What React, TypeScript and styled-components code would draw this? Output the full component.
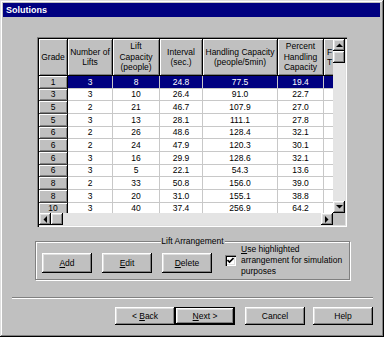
import { Fragment } from "react";
import styled, { createGlobalStyle, css } from "styled-components";

const GlobalStyle = createGlobalStyle`
    html, body {
        margin: 0;
        padding: 0;
        background: #c0c0c0;
    }
    body {
        font-family: "Liberation Sans", Arial, sans-serif;
        font-size: 8.5px;
        color: #000;
    }
`;

const raised = css`
    background: #c0c0c0;
    box-shadow: inset -1px -1px #000, inset 1px 1px #fff, inset -2px -2px #808080, inset 2px 2px #dfdfdf;
`;

const Window = styled.div`
    width: 384px;
    height: 337px;
    box-sizing: border-box;
    padding: 3px 4px 3px 3px;
    background: #c0c0c0;
    box-shadow: inset -1px -1px #000, inset 1px 1px #dfdfdf, inset -2px -2px #808080, inset 2px 2px #fff;
    display: flex;
    flex-direction: column;
`;

const TitleBar = styled.div`
    height: 14px;
    background: #000080;
    color: #fff;
    font-weight: bold;
    font-size: 9px;
    padding-left: 3px;
    display: flex;
    align-items: center;
`;

const TableFrame = styled.div`
    margin: 20px 0 0 34px;
    width: 310px;
    height: 190px;
    box-sizing: border-box;
    padding: 2px;
    box-shadow: inset 1px 1px #808080, inset 2px 2px #000, inset -1px -1px #fff, inset -2px -2px #dfdfdf;
    display: grid;
    grid-template-columns: 294px 12px;
    grid-template-rows: 174px 12px;
`;

const Viewport = styled.div`
    overflow: hidden;
    background: #fff;
`;

const Grid = styled.div`
    display: grid;
    grid-template-columns: 29px 45px 47px 43px 75px 46px 60px;
    grid-template-rows: 37px;
    grid-auto-rows: 12.67px;
`;

const HeadCell = styled.div<{ $left?: boolean }>`
    background: #c0c0c0;
    box-shadow: inset 1px 1px #fff, inset -1px -1px #808080;
    border-right: 1px solid #000;
    border-bottom: 1px solid #000;
    box-sizing: border-box;
    display: flex;
    align-items: center;
    justify-content: ${(p) => (p.$left ? "flex-start" : "center")};
    padding-left: ${(p) => (p.$left ? "3px" : "0")};
    text-align: ${(p) => (p.$left ? "left" : "center")};
    line-height: 10.5px;
    white-space: nowrap;
    overflow: hidden;
`;

const RowHead = styled.div`
    background: #c0c0c0;
    box-shadow: inset 1px 1px #fff, inset -1px -1px #808080;
    border-right: 1px solid #000;
    border-bottom: 1px solid #404040;
    box-sizing: border-box;
    display: flex;
    align-items: center;
    justify-content: center;
`;

const Cell = styled.div<{ $sel?: boolean }>`
    background: ${(p) => (p.$sel ? "#000080" : "#fff")};
    color: ${(p) => (p.$sel ? "#fff" : "#000")};
    border-right: 1px solid #c8c8c8;
    border-bottom: 1px solid #c8c8c8;
    box-sizing: border-box;
    display: flex;
    align-items: center;
    justify-content: center;
`;

const VScroll = styled.div`
    background: #e4e4e4;
    display: flex;
    flex-direction: column;
`;

const HScroll = styled.div`
    background: #e4e4e4;
    display: flex;
`;

const Spacer = styled.div`
    flex: 1;
`;

const ScrollBtn = styled.div`
    ${raised};
    width: 12px;
    height: 12px;
    flex: none;
    display: flex;
    align-items: center;
    justify-content: center;
`;

const Corner = styled.div`
    background: #c0c0c0;
`;

const GroupBox = styled.div`
    position: relative;
    margin: 14px 0 0 32px;
    width: 315px;
    height: 39px;
    box-sizing: border-box;
    border: 1px solid #808080;
    box-shadow: inset 1px 1px #fff, 1px 1px #fff;
    padding: 0 6px;
    display: flex;
    align-items: center;
`;

const Legend = styled.span`
    position: absolute;
    top: -6px;
    left: 50%;
    transform: translateX(-50%);
    background: #c0c0c0;
    padding: 0 1px;
    line-height: 11px;
    white-space: nowrap;
`;

const ButtonRow = styled.div`
    display: flex;
    gap: 10px;
    margin-top: 5px;
`;

const Button = styled.div<{ $w?: number; $h?: number; $default?: boolean; $ml?: number }>`
    ${raised};
    width: ${(p) => p.$w ?? 50}px;
    height: ${(p) => p.$h ?? 20}px;
    margin-left: ${(p) => p.$ml ?? 0}px;
    display: flex;
    align-items: center;
    justify-content: center;
    white-space: nowrap;
    ${(p) =>
        p.$default &&
        css`
            box-shadow: inset 0 0 0 1px #000, inset -2px -2px #000, inset 2px 2px #fff, inset -3px -3px #808080,
                inset 3px 3px #dfdfdf;
        `}
`;

const CheckRow = styled.div`
    display: flex;
    align-items: center;
    margin-left: 13px;
    gap: 5px;
`;

const CheckBox = styled.div`
    width: 11px;
    height: 11px;
    background: #fff;
    box-shadow: inset 1px 1px #808080, inset 2px 2px #000, inset -1px -1px #fff, inset -2px -2px #dfdfdf;
    display: flex;
    align-items: center;
    justify-content: center;
`;

const CheckLabel = styled.div`
    line-height: 11.3px;
`;

const Separator = styled.div`
    margin: 17px 0 0 9px;
    width: 361px;
    border-top: 1px solid #808080;
    border-bottom: 1px solid #fff;
`;

const Footer = styled.div`
    display: flex;
    margin: 8px 0 0 112px;
`;

const Arrow = ({ dir }: { dir: "up" | "down" | "left" | "right" }) => {
    const pts = {
        up: "0,4 7,4 3.5,0.5",
        down: "0,0 7,0 3.5,3.5",
        left: "4,0 4,7 0.5,3.5",
        right: "0,0 0,7 3.5,3.5",
    }[dir];
    const vert = dir === "up" || dir === "down";
    return (
        <svg width={vert ? 7 : 4} height={vert ? 4 : 7} viewBox={vert ? "0 0 7 4" : "0 0 4 7"}>
            <polygon points={pts} fill="#000" />
        </svg>
    );
};

const rows = [
    ["1", "3", "8", "24.8", "77.5", "19.4"],
    ["3", "3", "10", "26.4", "91.0", "22.7"],
    ["5", "2", "21", "46.7", "107.9", "27.0"],
    ["5", "3", "13", "28.1", "111.1", "27.8"],
    ["6", "2", "26", "48.6", "128.4", "32.1"],
    ["6", "2", "24", "47.9", "120.3", "30.1"],
    ["6", "3", "16", "29.9", "128.6", "32.1"],
    ["6", "3", "5", "22.1", "54.3", "13.6"],
    ["8", "2", "33", "50.8", "156.0", "39.0"],
    ["8", "3", "20", "31.0", "155.1", "38.8"],
    ["10", "3", "40", "37.4", "256.9", "64.2"],
];

const App = () => {
    return (
        <>
            <GlobalStyle />
            <Window>
                <TitleBar>Solutions</TitleBar>

                <TableFrame>
                    <Viewport>
                        <Grid>
                            <HeadCell>Grade</HeadCell>
                            <HeadCell>Number of<br />Lifts</HeadCell>
                            <HeadCell>Lift<br />Capacity<br />(people)</HeadCell>
                            <HeadCell>Interval<br />(sec.)</HeadCell>
                            <HeadCell>Handling Capacity<br />(people/5min)</HeadCell>
                            <HeadCell>Percent<br />Handling<br />Capacity</HeadCell>
                            <HeadCell $left>F<br />T</HeadCell>
                            {rows.map((r, i) => (
                                <Fragment key={i}>
                                    <RowHead>{r[0]}</RowHead>
                                    {r.slice(1).map((v, j) => (
                                        <Cell key={j} $sel={i === 0}>{v}</Cell>
                                    ))}
                                    <Cell $sel={i === 0} />
                                </Fragment>
                            ))}
                        </Grid>
                    </Viewport>
                    <VScroll>
                        <ScrollBtn><Arrow dir="up" /></ScrollBtn>
                        <ScrollBtn />
                        <Spacer />
                        <ScrollBtn><Arrow dir="down" /></ScrollBtn>
                    </VScroll>
                    <HScroll>
                        <ScrollBtn><Arrow dir="left" /></ScrollBtn>
                        <ScrollBtn />
                        <Spacer />
                        <ScrollBtn><Arrow dir="right" /></ScrollBtn>
                    </HScroll>
                    <Corner />
                </TableFrame>

                <GroupBox>
                    <Legend>Lift Arrangement</Legend>
                    <ButtonRow>
                        <Button><span><u>A</u>dd</span></Button>
                        <Button><span><u>E</u>dit</span></Button>
                        <Button><span><u>D</u>elete</span></Button>
                    </ButtonRow>
                    <CheckRow>
                        <CheckBox>
                            <svg width="7" height="7" viewBox="0 0 7 7">
                                <polyline points="0.5,3 2.5,5 6.5,1" fill="none" stroke="#000" strokeWidth="1.6" />
                            </svg>
                        </CheckBox>
                        <CheckLabel>
                            <u>U</u>se highlighted<br />
                            arrangement for simulation<br />
                            purposes
                        </CheckLabel>
                    </CheckRow>
                </GroupBox>

                <Separator />

                <Footer>
                    <Button $w={60} $h={18}><span>&lt; <u>B</u>ack</span></Button>
                    <Button $w={60} $h={18} $default><span><u>N</u>ext &gt;</span></Button>
                    <Button $w={60} $h={18} $ml={10}>Cancel</Button>
                    <Button $w={60} $h={18} $ml={8}>Help</Button>
                </Footer>
            </Window>
        </>
    );
};

export default App;
